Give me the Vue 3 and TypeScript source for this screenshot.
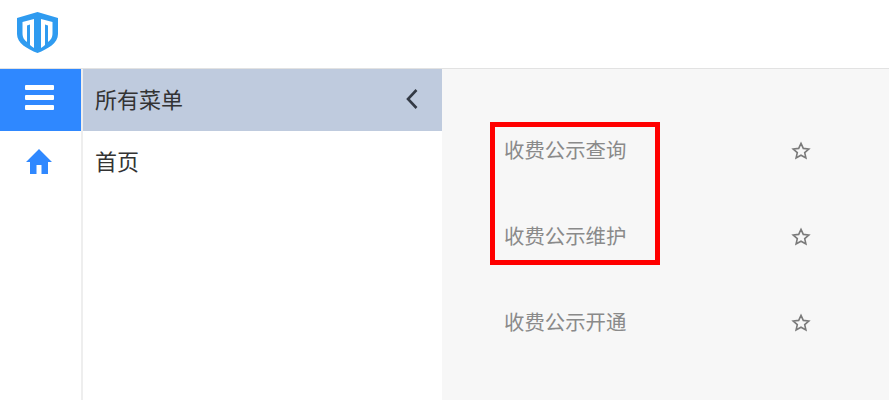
<template>
  <div class="page">
    <header class="top-bar">
      <svg class="logo" viewBox="0 0 41 41" width="41" height="41">
        <path
          fill="#2f9bf0"
          fill-rule="evenodd"
          d="M20.5 0 L41 6 V22 C41 31 31 37 20.5 41 C10 37 0 31 0 22 V6 Z
             M5.5 10 L17 7 V36 C15.5 35 14 34 13 33 V12.5 L10 13.5 V30 C7.5 28 5.5 26 5.5 21 Z
             M35.5 10 L24 7 V36 C25.5 35 27 34 28 33 V12.5 L31 13.5 V30 C33.5 28 35.5 26 35.5 21 Z"
        />
      </svg>
    </header>
    <div class="body">
      <aside class="rail">
        <button class="rail-toggle" type="button">
          <span class="bar"></span>
          <span class="bar"></span>
          <span class="bar"></span>
        </button>
        <div class="rail-home">
          <svg viewBox="0 0 28 26" width="28" height="26">
            <path d="M14 1 L27 14 H23 V26 H16.5 V17 H11.5 V26 H5 V14 H1 Z" fill="#2f88ff" />
          </svg>
        </div>
      </aside>
      <nav class="menu">
        <div class="menu-head">
          <span class="menu-title">所有菜单</span>
          <svg class="chevron" viewBox="0 0 14 22" width="14" height="22">
            <path d="M11.5 2 L3 11 L11.5 20" fill="none" stroke="#333a45" stroke-width="2.6" />
          </svg>
        </div>
        <div class="menu-item">首页</div>
      </nav>
      <main class="content">
        <div v-for="item in items" :key="item" class="row">
          <span class="row-name">{{ item }}</span>
          <svg class="star" viewBox="0 0 20 20" width="20" height="20">
            <path d="M10 2.4 L12.3 7.4 L17.8 8 L13.7 11.6 L14.9 17 L10 14.2 L5.1 17 L6.3 11.6 L2.2 8 L7.7 7.4 Z" fill="none" stroke="#7a7a7a" stroke-width="1.6" />
          </svg>
        </div>
        <div class="highlight"></div>
      </main>
    </div>
  </div>
</template>

<script setup lang="ts">
const items: string[] = ['收费公示查询', '收费公示维护', '收费公示开通']
</script>

<style>
html,
body {
  margin: 0;
  overflow: hidden;
}
</style>

<style scoped>
.page {
  width: 889px;
  height: 400px;
  display: flex;
  flex-direction: column;
  background: #fff;
  font-family: "Liberation Sans", "Noto Sans CJK SC", sans-serif;
  overflow: hidden;
}

.top-bar {
  height: 69px;
  flex-shrink: 0;
  box-sizing: border-box;
  border-bottom: 1px solid #e2e2e2;
  display: flex;
  align-items: flex-start;
  padding: 12px 0 0 17px;
}

.logo {
  filter: blur(0.5px);
}

.body {
  flex: 1;
  display: flex;
  min-height: 0;
}

.rail {
  width: 81px;
  flex-shrink: 0;
  border-right: 2px solid #eeeeee;
}

.rail-toggle {
  width: 100%;
  height: 62px;
  padding: 0 0 5px;
  border: none;
  background: #2f88ff;
  display: flex;
  flex-direction: column;
  align-items: center;
  justify-content: center;
  gap: 5px;
}

.bar {
  width: 29px;
  height: 5px;
  border-radius: 1px;
  background: #fff;
  margin-left: -3px;
}

.rail-home {
  display: flex;
  justify-content: center;
  padding-top: 17px;
  margin-left: -3px;
}

.menu {
  width: 359px;
  flex-shrink: 0;
}

.menu-head {
  height: 62px;
  background: #bfcbde;
  display: flex;
  align-items: center;
  justify-content: space-between;
  padding: 0 23px 0 12px;
  font-size: 22px;
  color: #333;
}

.menu-title {
  margin-top: -4px;
}

.chevron {
  margin-top: -2px;
}

.menu-item {
  padding: 19px 12px;
  font-size: 22px;
  line-height: 26px;
  color: #333;
}

.content {
  flex: 1;
  position: relative;
  background: #f7f7f7;
  padding-top: 39px;
}

.row {
  height: 86px;
  display: flex;
  align-items: center;
  padding-left: 62px;
  font-size: 20.4px;
  color: #8a8a8a;
}

.row-name {
  width: 287px;
  margin-top: -4px;
}

.star {
  display: block;
}

.highlight {
  position: absolute;
  left: 48px;
  top: 53px;
  width: 160px;
  height: 133px;
  border: 5px solid #ff0000;
}
</style>
